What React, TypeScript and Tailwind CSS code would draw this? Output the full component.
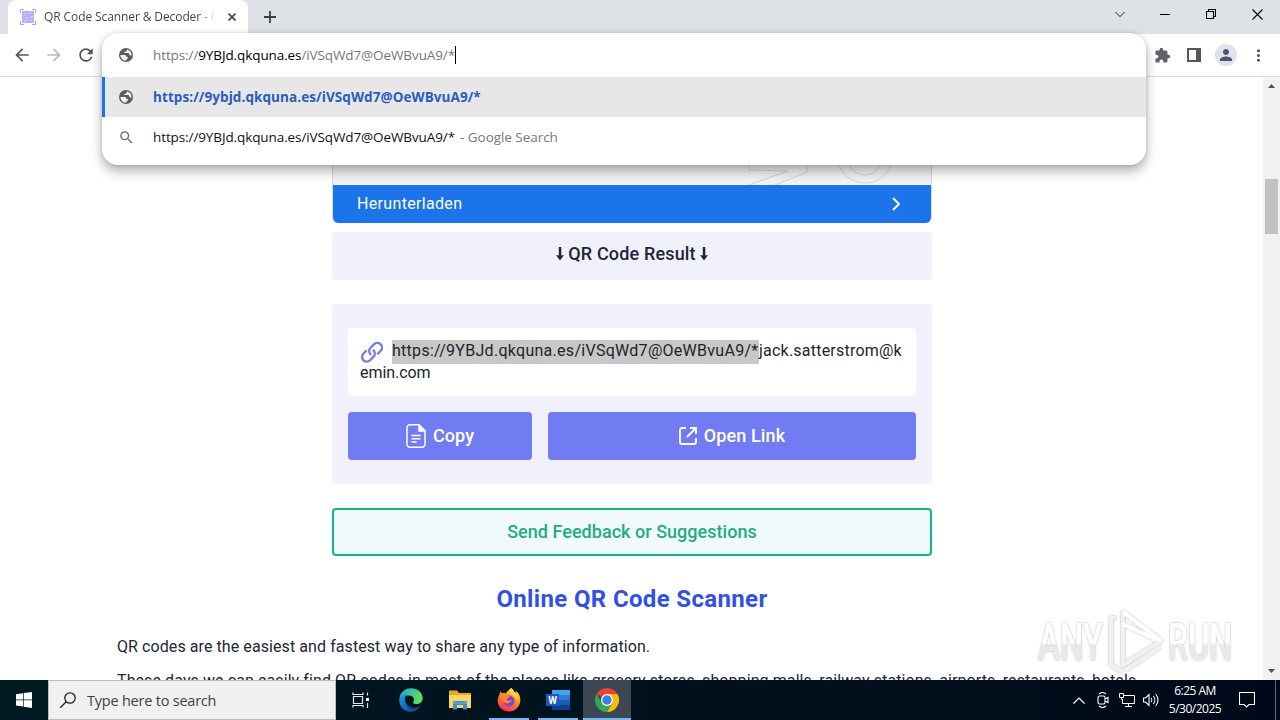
import type { ReactNode } from 'react';
import {
  MdArrowBack,
  MdArrowForward,
  MdRefresh,
  MdSearch,
  MdExtension,
  MdPerson,
  MdMoreVert,
} from 'react-icons/md';

const URL_TEXT = 'https://9YBJd.qkquna.es/iVSqWd7@OeWBvuA9/*';

function TabStrip() {
  return (
    <div className="flex h-[34px] bg-[#dee1e6] pl-2">
      <div className="flex h-[34px] w-60 items-center rounded-t-lg bg-white pl-3">
        <svg className="h-4 w-4 shrink-0" viewBox="0 0 16 16" fill="none">
          <rect x="2" y="2" width="12" height="12" fill="#b4b3fa" />
          <path d="M.5 4V.5H4M12 .5h3.5V4M15.5 12v3.5H12M4 15.5H.5V12" stroke="#a3a1f5" />
          <path d="M4 4h2v2H4zM9 3h2v2H9zM6 8h2v2H6zM11 7h2v2h-2zM4 11h2v2H4zM9 11h3v1H9z" fill="#cbcafd" />
        </svg>
        <div className="ml-2 w-[172px] overflow-hidden whitespace-nowrap bg-gradient-to-r from-[#3c4043] from-90% to-transparent bg-clip-text text-[12px] tracking-[-0.1px] text-transparent">
          QR Code Scanner &amp; Decoder - Online
        </div>
        <svg className="ml-3 h-2 w-2 shrink-0" viewBox="0 0 8 8" stroke="#45494d" strokeWidth="1.7">
          <path d="M.5.5l7 7M7.5.5l-7 7" />
        </svg>
      </div>
      <svg className="ml-4 mt-[11px] h-3 w-3" viewBox="0 0 12 12" stroke="#3c4043" strokeWidth="1.8">
        <path d="M6 0v12M0 6h12" />
      </svg>
      <div className="ml-auto flex h-7 items-center">
        <svg className="mr-[35px] h-[7px] w-[10px]" viewBox="0 0 10 7" fill="none" stroke="#222" strokeWidth="1">
          <path d="M.5 1L5 5.7 9.5 1" />
        </svg>
        <svg className="mr-9 h-[10px] w-[10px]" viewBox="0 0 10 10" stroke="#000">
          <path d="M0 5.5h10" />
        </svg>
        <svg className="mr-9 h-[10px] w-[10px]" viewBox="0 0 10 10" fill="none" stroke="#000" strokeWidth="1.1">
          <path d="M.5 2.5h7v7h-7zM2.5 2.5v-2h7v7h-2" />
        </svg>
        <svg className="mr-[17px] h-[11px] w-[11px]" viewBox="0 0 11 11" stroke="#000" strokeWidth="1.1">
          <path d="M.5.5l10 10M10.5.5l-10 10" />
        </svg>
      </div>
    </div>
  );
}

function Toolbar() {
  return (
    <div className="flex h-[43px] items-center border-b border-[#dcdddf] bg-white">
      <MdArrowBack className="ml-3 text-[#505357]" size={20} />
      <MdArrowForward className="ml-3 text-[#b9bbbd]" size={20} />
      <MdRefresh className="ml-3 text-[#505357]" size={20} />
      <div className="ml-auto flex items-center">
        <MdExtension className="mr-4 text-[#5f6368]" size={17} />
        <svg className="mr-[14px] h-[14px] w-[14px]" viewBox="0 0 14 14">
          <path d="M0 0h14v14H0z" fill="#54585c" />
          <path d="M2 2h7v10H2z" fill="#fff" />
        </svg>
        <div className="mr-4 flex h-[22px] w-[22px] items-center justify-center rounded-full bg-[#dfe1ec]">
          <MdPerson className="text-[#50546c]" size={18} />
        </div>
        <MdMoreVert className="-ml-1 mr-3 text-[#55595d]" size={19} />
      </div>
    </div>
  );
}

function GlobeIcon() {
  return (
    <svg className="h-4 w-4 shrink-0" viewBox="0 0 16 16">
      <circle cx="8" cy="8" r="7" fill="#595c60" />
      <path d="M2.400 8.200C2.300 8 4 8 6.500 8c1.200 0 1.700.6 1.700 1.700h1.600v2.100c-.9 0-1.500.4-1.500 1.800-3.200.2-5.700-2.300-5.900-5.400z" fill="#f3f3f3" />
      <path d="M8.800 2.500c0 1.600-.2 2.200-1.600 2.200-.8 0-1 .4-1 1.200h4.200c.7.1.8.9 1 1.800.4.900 1.200.900 2.200.700C13.800 5.200 11.700 2.900 8.800 2.500z" fill="#f3f3f3" />
    </svg>
  );
}

function Suggestions() {
  return (
    <div className="absolute left-[102px] top-[33px] h-[132px] w-[1044px] rounded-2xl bg-white text-[13.5px] leading-none shadow-[0_7px_12px_rgba(0,0,0,0.28),0_0_5px_rgba(0,0,0,0.16)]">
      <div className="flex h-11 items-center pl-4">
        <GlobeIcon />
        <p className="ml-[19px] whitespace-nowrap pt-0.5 tracking-[-0.1px] text-[#74777a]">
          https://<span className="text-black">9YBJd.qkquna.es</span>/iVSqWd7@OeWBvuA9/*
        </p>
        <span className="h-[18px] w-px bg-black" />
      </div>
      <div className="flex h-10 items-center border-l-[3px] border-[#1a73e8] bg-[#e7e7e8] pl-[13px]">
        <GlobeIcon />
        <p className="ml-[19px] whitespace-nowrap pt-0.5 font-bold tracking-[0.08px] text-[#2a5cba]">
          https://9ybjd.qkquna.es/iVSqWd7@OeWBvuA9/*
        </p>
      </div>
      <div className="flex h-10 items-center pl-4">
        <MdSearch className="text-[#6f7377]" size={17} />
        <p className="ml-[18px] whitespace-nowrap pt-0.5 tracking-[-0.1px] text-[#111]">{URL_TEXT}</p>
        <p className="ml-[5px] whitespace-nowrap pt-0.5 tracking-[-0.05px] text-[#74777a]">- Google Search</p>
      </div>
    </div>
  );
}

function AdBanner() {
  return (
    <div className="h-[146px] overflow-hidden rounded-b-md border-x border-[#d3d7dc] bg-[#f1f3f4]">
      <div className="flex h-[108px] items-end justify-end pr-[34px]">
        <svg className="h-[30px] w-[150px]" viewBox="0 0 150 30" fill="none" stroke="#cfd1d6">
          <path d="M2 0v15l39 1L2 30M60 0v17L28 30" />
          <circle cx="118" cy="0" r="28" />
          <circle cx="118" cy="3" r="17" />
        </svg>
      </div>
      <div className="flex h-[38px] items-center bg-[#1b74e9] pl-6 pr-[30px] text-white">
        <span className="font-['Roboto',sans-serif] text-[16px] tracking-[0.33px]">Herunterladen</span>
        <svg className="ml-auto h-[14px] w-[9px]" viewBox="0 0 9 14" fill="none" stroke="#fff" strokeWidth="2">
          <path d="M1 1l6 6-6 6" />
        </svg>
      </div>
    </div>
  );
}

function DownArrow() {
  return (
    <svg className="h-[14px] w-2" viewBox="0 0 8 14" fill="#20263a">
      <path d="M2.800 0h2.500v8.500L8 8l-4 5.500L0 8l2.800.5z" />
    </svg>
  );
}

function ResultCard() {
  return (
    <div className="mt-6 h-[180px] rounded bg-[#f0f1fc] px-4 pt-6">
      <div className="h-[68px] rounded bg-white px-3 pt-3 text-[16px] leading-[22px] text-[#212529]">
        <div className="flex h-[22px] items-center whitespace-nowrap">
          <svg className="mt-px h-6 w-6 shrink-0" viewBox="0 0 24 24" fill="none" stroke="#7b7ddd" strokeWidth="2.400" strokeLinecap="round">
            <path d="M10.500 14.200a4.600 4.600 0 0 1-.2-6.200l3.600-3.600a4.600 4.600 0 0 1 6.800 6.400l-2.700 2.800" />
            <path d="M13.500 10.400a4.600 4.600 0 0 1 .2 6.200l-3.600 3.600a4.600 4.600 0 0 1-6.800-6.400L6 11" />
          </svg>
          <span className="ml-2 mt-0.5 h-6 w-[367px] bg-[#c8c8c8] tracking-[0.28px]">{URL_TEXT}</span>
          <span className="tracking-[0.22px]">jack.satterstrom@k</span>
        </div>
        <p className="tracking-[-0.05px]">emin.com</p>
      </div>
      <div className="mt-4 flex gap-4 text-[18px] font-medium text-white">
        <button className="flex h-12 w-[184px] items-center justify-center gap-[7px] rounded bg-[#717bf2]">
          <svg className="h-6 w-5" viewBox="0 0 20 24" fill="none" stroke="#fff" strokeWidth="1.500" strokeLinecap="round">
            <path d="M13 .8H4A3 3 0 0 0 1 4v16a3 3 0 0 0 3 3.200h12a3 3 0 0 0 3-3.200V7z" strokeLinejoin="round" />
            <path d="M13 1v6h6z" fill="#fff" />
            <path d="M6 11.500h8M6 14.800h8M6 18h4" />
          </svg>
          <span className="pb-0.5 tracking-[0.1px]">Copy</span>
        </button>
        <button className="flex h-12 w-[368px] items-center justify-center gap-[7px] rounded bg-[#717bf2]">
          <svg className="h-[18px] w-[18px]" viewBox="0 0 18 18" fill="none" stroke="#fff" strokeWidth="1.800">
            <path d="M7 1H3a2 2 0 0 0-2 2v12a2 2 0 0 0 2 2h12a2 2 0 0 0 2-2v-4M11 1h6v6M17 1L8 10" />
          </svg>
          <span className="pb-0.5 tracking-[0.1px]">Open Link</span>
        </button>
      </div>
    </div>
  );
}

function Page() {
  return (
    <div className="flex h-[603px]">
      <main className="h-full flex-1 overflow-hidden bg-white font-['Roboto',sans-serif] text-[#20263a]">
        <div className="ml-[332px] w-[600px]">
          <AdBanner />
          <div className="mt-[9px] flex h-12 items-center justify-center gap-1 rounded bg-[#f0f1fc] pb-[5px] text-[18px] font-medium">
            <DownArrow />
            <span className="tracking-[0.16px]">QR Code Result</span>
            <DownArrow />
          </div>
          <ResultCard />
          <button className="mt-6 block h-12 w-full rounded border-2 border-[#16b388] bg-[#f1fafb] pb-0.5 text-[18px] font-medium tracking-[0.03px] text-[#1fab86]">
            Send Feedback or Suggestions
          </button>
          <h1 className="mt-[27px] text-center text-[24px] font-bold leading-8 tracking-[0.35px] text-[#3350e6]">
            Online QR Code Scanner
          </h1>
        </div>
        <div className="ml-[117px] mt-5 whitespace-nowrap text-[16px] leading-6 text-[#212636]">
          <p className="tracking-[0.08px]">QR codes are the easiest and fastest way to share any type of information.</p>
          <p className="mt-[10px] tracking-[0.09px]">
            These days we can easily find QR codes in most of the places like grocery stores, shopping malls, railway stations, airports, restaurants, hotels,
          </p>
        </div>
      </main>
      <div className="flex w-[17px] flex-col items-center bg-[#f1f1f1]">
        <svg className="mt-[7px] h-1 w-[7px]" viewBox="0 0 7 4" fill="#505050">
          <path d="M0 4l3.500-4L7 4z" />
        </svg>
        <div className="mt-[91px] h-[55px] w-[13px] bg-[#c1c1c1]" />
        <svg className="mb-[7px] mt-auto h-1 w-[7px]" viewBox="0 0 7 4" fill="#505050">
          <path d="M0 0l3.500 4L7 0z" />
        </svg>
      </div>
    </div>
  );
}

function Watermark() {
  return (
    <svg className="absolute left-[1030px] top-[600px] h-20 w-[214px]" viewBox="0 0 214 80">
      <defs>
        <linearGradient id="mark" x1="0" y1="0" x2="0" y2="1">
          <stop offset="0.5" stopColor="#fff" />
          <stop offset="0.55" stopColor="#e9e9e9" />
        </linearGradient>
        <filter id="halo" x="-10%" y="-20%" width="120%" height="140%">
          <feDropShadow dx="0" dy="0" stdDeviation="1.3" floodColor="#000" floodOpacity="0.35" />
        </filter>
      </defs>
      <g filter="url(#halo)" fill="url(#mark)" fontFamily="Roboto, sans-serif" fontSize="51" fontWeight="500">
        <text x="8" y="60" textLength="65" lengthAdjust="spacingAndGlyphs">ANY</text>
        <text x="138" y="60" textLength="64" lengthAdjust="spacingAndGlyphs">RUN</text>
        <g fill="none" stroke="#f1f1f1" strokeWidth="4" strokeLinejoin="round">
          <path d="M93 12l38 29-38 24z" />
          <path d="M86 18h-5v47l12 7 37-25" />
          <path d="M93 12l38 29M93 24l34 16" stroke="#fff" />
        </g>
      </g>
    </svg>
  );
}

function TaskItem({ children, open, active }: { children: ReactNode; open?: boolean; active?: boolean }) {
  return (
    <div className={`flex h-10 w-12 flex-col items-center ${active ? 'bg-[#3b4853]' : ''}`}>
      <div className="flex h-[38px] items-center pt-0.5">{children}</div>
      <div className={`h-0.5 ${active ? 'w-12' : 'w-10'} ${open || active ? 'bg-[#76b9ed]' : ''}`} />
    </div>
  );
}

function Taskbar() {
  return (
    <div className="flex h-10 items-center bg-gradient-to-r from-[#001a22] to-[#000919] text-white">
      <div className="flex w-12 justify-center">
        <svg className="h-4 w-4" viewBox="0 0 16 16" fill="#fff">
          <path d="M0 2.200L7 1.200v6.300H0zM7.700 1.100L16 0v7.500H7.700zM0 8.200h7v6.400l-7-1zM7.700 8.200H16V16l-8.300-1.200z" />
        </svg>
      </div>
      <div className="flex h-10 w-72 items-center border border-[#bcbdbe] bg-[#f0f0f0] pl-[11px]">
        <svg className="h-4 w-4" viewBox="0 0 16 16" fill="none" stroke="#222" strokeWidth="1.300">
          <circle cx="10" cy="6" r="5.200" />
          <path d="M6.200 9.800L.3 15.700" />
        </svg>
        <span className="ml-[11px] pt-px text-[14.5px] tracking-[-0.22px] text-[#3f3f3f]">Type here to search</span>
      </div>
      <div className="flex gap-[1px]">
        <div className="flex h-10 w-[50px] items-center justify-center">
          <svg className="h-4 w-[18px]" viewBox="0 0 18 16" fill="none" stroke="#e8e8e8" strokeWidth="1.200">
            <path d="M1 .5v2h10v-2M1 15.500v-2h10v2M1.500 4.500h9v7h-9zM15.500.5v3M15.500 11v5" />
            <path d="M14 6h3v3h-3z" fill="#fff" stroke="none" />
          </svg>
        </div>
        <TaskItem>
          <svg className="h-6 w-6" viewBox="0 0 24 24">
            <defs>
              <linearGradient id="edgeTop" x1="0" y1="0" x2="1" y2="0.4">
                <stop offset="0" stopColor="#1ba4e8" />
                <stop offset="1" stopColor="#60dc5c" />
              </linearGradient>
              <linearGradient id="edgeBody" x1="0" y1="0" x2="0.6" y2="1">
                <stop offset="0" stopColor="#1a9ee4" />
                <stop offset="1" stopColor="#0b57aa" />
              </linearGradient>
            </defs>
            <path d="M.3 11C1 4.500 6 .2 12 .2c7 0 11.700 5 11.700 9.800 0 3.700-2.600 6-6 6-2.700 0-4.200-.8-3.400-2.100 2-3.200-.4-6.400-4.600-6.400C5.600 7.500 1 9 .3 11z" fill="url(#edgeTop)" />
            <path d="M.3 11c1-3 4-5 8-4.500C6 8 5.300 11 6.400 14c1.600 4.500 7 7.200 11.400 5.600.9-.3 2.100-1 2.800-1.400C18.500 22 15 24 11.700 23.800 5 23.600-.4 18 .3 11z" fill="url(#edgeBody)" />
            <path d="M8.700 7c-2.200 1.600-3 4.500-2 7.500 1.600 4.600 7.400 6.900 12 4.600 2-1 2.600-.9 1.600.4-2.400 3.300-7 4-10.300 1.500C6 18 5.200 10 8.700 7z" fill="#114a8b" />
          </svg>
        </TaskItem>
        <TaskItem>
          <svg className="h-5 w-[22px]" viewBox="0 0 22 20">
            <path d="M0 1.500C0 .7.5.500 1 .500h7L10 3h11c.6 0 1 .4 1 1v14H0z" fill="#e9a825" />
            <path d="M0 5h22v13H0z" fill="#fcd462" />
            <path d="M4 19.500V12c0-.6.4-1 1-1h12c.6 0 1 .4 1 1v7.500h-4V15H8v4.500z" fill="#3e8fd0" />
            <path d="M4 13h14" stroke="#64b6ec" />
          </svg>
        </TaskItem>
        <TaskItem open>
          <svg className="h-6 w-6" viewBox="0 0 24 24">
            <defs>
              <linearGradient id="fox" x1="0.8" y1="0" x2="0.3" y2="1">
                <stop offset="0" stopColor="#ffe83e" />
                <stop offset="0.45" stopColor="#ff9022" />
                <stop offset="1" stopColor="#f52c55" />
              </linearGradient>
            </defs>
            <path d="M14 0c3 2 3 4 4.500 5L19 3c3.500 3 4.600 6 4.300 10C22.700 19 18 23.500 12 23.500S.700 19 .700 13c0-3 .8-5 2-7l.5-3C4 4.500 4.500 5 6 5c1 0 2-.1 3 .5C9.500 3.500 12 2.500 14 0z" fill="url(#fox)" />
            <circle cx="12" cy="13" r="5.500" fill="#7a42dc" />
            <path d="M3 6c2.500-1.500 5-.5 6.500 1 .5 1 3 1 3.500 1.500-.5 1.500-3 1-3 2.500 0 1.600 2.700 2.500 5 1-1.300 3.500-5.500 4.500-8.500 2C4 12 3.500 9 3 6z" fill="#ff842d" />
            <path d="M14 0c3 2 3 4 4.500 5 2.500 2.500 2.700 5.800 2.200 9-.5-3.500-2.500-6-5-7C13 5.500 12.500 3 14 0z" fill="#ffd938" />
          </svg>
        </TaskItem>
        <TaskItem open>
          <svg className="h-[22px] w-6" viewBox="0 0 24 22">
            <path d="M6 1h18v5H6z" fill="#41a5ee" />
            <path d="M6 6h18v5H6z" fill="#2b7cd3" />
            <path d="M6 11h18v5H6z" fill="#185abd" />
            <path d="M6 16h18v5H6z" fill="#103f91" />
            <path d="M0 5h13v12H0z" fill="#185abd" />
            <text x="6.500" y="14.500" fill="#fff" fontSize="10" fontWeight="700" fontFamily="Roboto, sans-serif" textAnchor="middle">W</text>
          </svg>
        </TaskItem>
        <TaskItem active>
          <svg className="h-6 w-6" viewBox="0 0 24 24">
            <path d="M12 12L1.600 6A12 12 0 0 1 22.400 6z" fill="#e94235" />
            <path d="M12 12V6h10.400A12 12 0 0 1 12 24l5.200-9z" fill="#fbbc05" />
            <path d="M12 12l5.200 3L12 24A12 12 0 0 1 1.600 6l5.200 9z" fill="#34a853" />
            <circle cx="12" cy="12" r="6" fill="#fff" />
            <circle cx="12" cy="12" r="4.700" fill="#3b7ded" />
          </svg>
        </TaskItem>
      </div>
      <div className="ml-auto flex items-center">
        <svg className="h-[7px] w-3" viewBox="0 0 12 7" fill="none" stroke="#fff" strokeWidth="1.200">
          <path d="M.5 6.500L6 1l5.500 5.500" />
        </svg>
        <svg className="ml-3 h-4 w-3" viewBox="0 0 12 16" fill="none" stroke="#fff" strokeWidth="1.100">
          <path d="M1 5.500C1 4.500 1.500 4 2.500 4h4C7.500 4 8 4.500 8 5.500v5c0 1-.5 1.500-1.500 1.500h-4C1.500 12 1 11.500 1 10.500zM8 7l3-1.500v5L8 9M2 2c2-1.700 5-1.700 7 0M2 14c2 1.700 5 1.700 7 0" />
        </svg>
        <svg className="ml-[10px] h-[14px] w-4" viewBox="0 0 16 14" fill="none" stroke="#fff">
          <path d="M5 2.500h10.500v8H3.500V6M9.500 10.500v3M6 13.500h7M.5.500h4v4h-4zM2.500 4.500v2" />
        </svg>
        <svg className="ml-2 h-[14px] w-4" viewBox="0 0 16 14" fill="none" stroke="#fff" strokeWidth="1.100">
          <path d="M.5 5h2L6 1.500v11L2.500 9h-2zM8 5c1 1 1 3 0 4M10.300 3c2 2.300 2 5.700 0 8M12.600 1c3.200 3.500 3.200 8.500 0 12" />
        </svg>
        <div className="ml-[9px] w-[54px] whitespace-nowrap text-center text-[12px] leading-[18px] tracking-[-0.5px]">
          <p>6:25 AM</p>
          <p>5/30/2025</p>
        </div>
        <svg className="ml-[17px] h-4 w-4" viewBox="0 0 16 16" fill="none" stroke="#fff" strokeWidth="1.100">
          <path d="M.5.500h15v12H10L7.500 15 5 12.500H.5z" />
        </svg>
        <span className="ml-5 mr-1 h-10 w-px bg-[#626a75]" />
      </div>
    </div>
  );
}

export default function App() {
  return (
    <div className="relative h-[720px] w-[1280px] overflow-hidden bg-white font-['Open_Sans','Noto_Sans',sans-serif]">
      <TabStrip />
      <Toolbar />
      <Page />
      <Taskbar />
      <Suggestions />
      <Watermark />
    </div>
  );
}
